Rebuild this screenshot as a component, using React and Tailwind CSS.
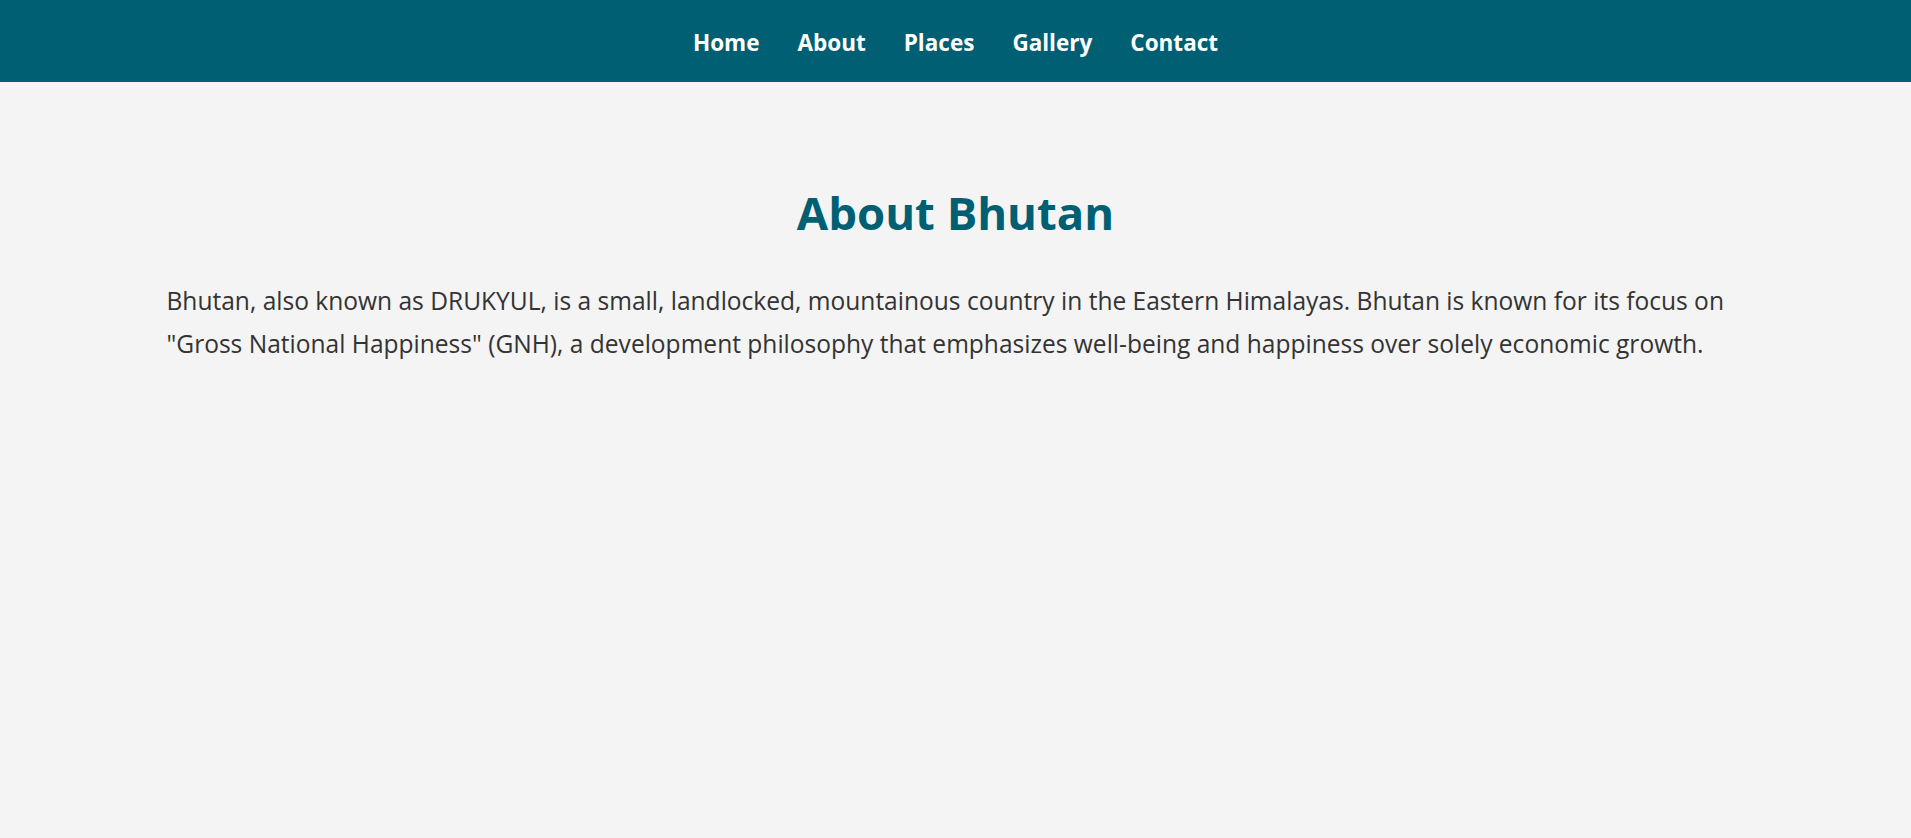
export default function App() {
  const links = ["Home", "About", "Places", "Gallery", "Contact"];
  return (
    <div className="min-h-[838px] bg-[#f4f4f4]" style={{ fontFamily: '"Open Sans", "Noto Sans", sans-serif' }}>
      <nav className="h-[82px] bg-[#005f73] flex items-center justify-center pt-[4px]">
        <ul className="flex items-center gap-[38px]">
          {links.map((l) => (
            <li key={l}>
              <a href="#" className="text-white font-bold text-[22.5px]">{l}</a>
            </li>
          ))}
        </ul>
      </nav>
      <section className="pt-[100px]">
        <h1 className="text-center text-[#005f73] font-bold text-[45.5px] leading-[60px]">About Bhutan</h1>
        <div className="mx-auto w-[1578px] mt-[37px]">
          <p className="text-[#333333] text-[24.55px] leading-[43px] whitespace-nowrap">
            Bhutan, also known as DRUKYUL, is a small, landlocked, mountainous country in the Eastern Himalayas. Bhutan is known for its focus on
            <br />
            "Gross National Happiness" (GNH), a development philosophy that emphasizes well-being and happiness over solely economic growth.
          </p>
        </div>
      </section>
    </div>
  );
}
